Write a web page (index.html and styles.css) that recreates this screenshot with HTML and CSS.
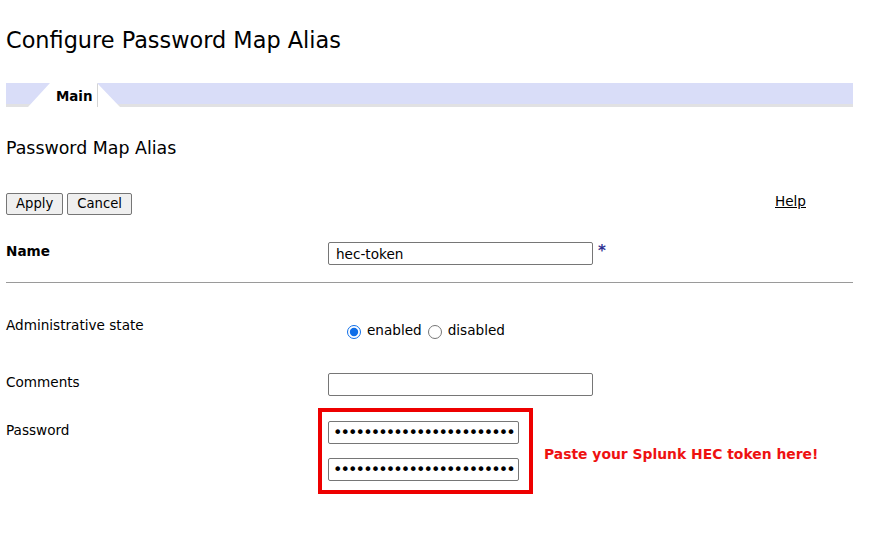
FILE: index.html
```html
<!DOCTYPE html>
<html lang="en">
<head>
<meta charset="utf-8">
<title>Configure Password Map Alias</title>
<link rel="stylesheet" href="styles.css">
</head>
<body>
<div class="page">
  <h1 class="title">Configure Password Map Alias</h1>
  <div class="tabbar">
    <div class="tab"><span class="tab-label">Main</span></div>
  </div>
  <h2 class="subtitle">Password Map Alias</h2>
  <div class="actions">
    <div class="btns">
      <button class="btn" type="button">Apply</button>
      <button class="btn" type="button">Cancel</button>
    </div>
    <a class="help" href="#">Help</a>
  </div>
  <div class="row row-name">
    <div class="label label-bold">Name</div>
    <div class="value"><input class="field field-wide" type="text" value="hec-token"><span class="req">*</span></div>
  </div>
  <hr class="sep">
  <div class="row row-state">
    <div class="label">Administrative state</div>
    <div class="value value-radios">
      <label class="radio"><input type="radio" name="state" checked><span>enabled</span></label>
      <label class="radio"><input type="radio" name="state"><span>disabled</span></label>
    </div>
  </div>
  <div class="row row-comments">
    <div class="label">Comments</div>
    <div class="value"><input class="field field-wide" type="text" value=""></div>
  </div>
  <div class="row row-password">
    <div class="label label-pad">Password</div>
    <div class="value value-password">
      <div class="highlight">
        <input class="field field-pass" type="password" value="abcdefghijklmnopqrstuvwxyz0123456789">
        <input class="field field-pass" type="password" value="abcdefghijklmnopqrstuvwxyz0123456789">
      </div>
      <div class="note">Paste your Splunk HEC token here!</div>
    </div>
  </div>
</div>
</body>
</html>
```
FILE: styles.css
```css
html, body {
  margin: 0;
  padding: 0;
  background: #ffffff;
}
body {
  font-family: "DejaVu Sans", Verdana, sans-serif;
  font-size: 13.6px;
  color: #000000;
}
.page {
  width: 847px;
  padding: 0 6px;
}
.title {
  margin: 26px 0 0 0;
  font-size: 22.4px;
  font-weight: normal;
  line-height: 28px;
}
.tabbar {
  margin-top: 29px;
  height: 24px;
  background: linear-gradient(#d9ddf8 0, #d9ddf8 21px, #e1e1e3 21px, #e1e1e3 24px);
}
.tab {
  margin-left: 22px;
  width: 92px;
  height: 24px;
  background: #ffffff;
  clip-path: polygon(22px 0, 69px 0, 92px 100%, 0 100%);
  padding-left: 28px;
  box-sizing: border-box;
}
.tab-label {
  display: inline-block;
  height: 24px;
  line-height: 27px;
  font-weight: bold;
  font-size: 13.4px;
  padding-right: 4px;
  border-right: 1px solid #d4d4d4;
  box-sizing: border-box;
  width: 42px;
}
.subtitle {
  margin: 30px 0 0 0;
  font-size: 17.4px;
  font-weight: normal;
  line-height: 22px;
}
.actions {
  margin-top: 34px;
  display: flex;
  justify-content: space-between;
  align-items: flex-start;
  padding-right: 47px;
}
.btns {
  display: flex;
  gap: 4px;
}
.btn {
  font-family: "DejaVu Sans", Verdana, sans-serif;
  font-size: 13.2px;
  height: 22px;
  padding: 0 9px;
  background: #efefef;
  border: 1px solid #767676;
  border-radius: 2px;
  color: #000;
  line-height: 20px;
}
.help {
  color: #000;
  text-decoration: underline;
  line-height: 16px;
  font-size: 13.6px;
}
.row {
  display: grid;
  grid-template-columns: 322px 1fr;
  align-items: start;
}
.label {
  line-height: 18px;
}
.label-bold {
  font-weight: bold;
}
.label-pad {
  padding-top: 13px;
}
.row-name {
  margin-top: 27px;
}
.value {
  display: flex;
  align-items: flex-start;
}
.field {
  font-family: "DejaVu Sans", Verdana, sans-serif;
  font-size: 13.6px;
  height: 23px;
  box-sizing: border-box;
  border: 1px solid #767676;
  border-radius: 2px;
  padding: 1px 7px;
  margin: 0;
  color: #000;
  background: #fff;
  outline: none;
}
.field-wide {
  width: 265px;
}
.req {
  margin-left: 5px;
  color: #2e3192;
  font-weight: bold;
  font-size: 15px;
  line-height: 18px;
}
.sep {
  margin: 17px 0 0 0;
  border: 0;
  height: 1px;
  background: #9a9a9a;
}
.row-state {
  margin-top: 33px;
}
.value-radios {
  padding-left: 18px;
  padding-top: 5px;
  align-items: center;
}
.radio {
  display: flex;
  align-items: center;
  line-height: 18px;
  margin-right: 5px;
}
.radio input {
  width: 14px;
  height: 14px;
  margin: 4px 6px 0 1px;
  accent-color: #0f6ee8;
}
.row-comments {
  margin-top: 34px;
}
.row-password {
  margin-top: 12px;
}
.value-password {
  margin-left: -10px;
  align-items: center;
  gap: 11px;
}
.highlight {
  display: flex;
  flex-direction: column;
  gap: 14px;
  border: 4px solid #ee0000;
  padding: 9px 10px 9px 6px;
}
.field-pass {
  width: 191px;
  padding: 0 4px;
  font-size: 16px;
  letter-spacing: -1.9px;
}
.note {
  color: #ee1111;
  font-weight: bold;
  font-size: 13.9px;
  padding-top: 6px;
}
```
